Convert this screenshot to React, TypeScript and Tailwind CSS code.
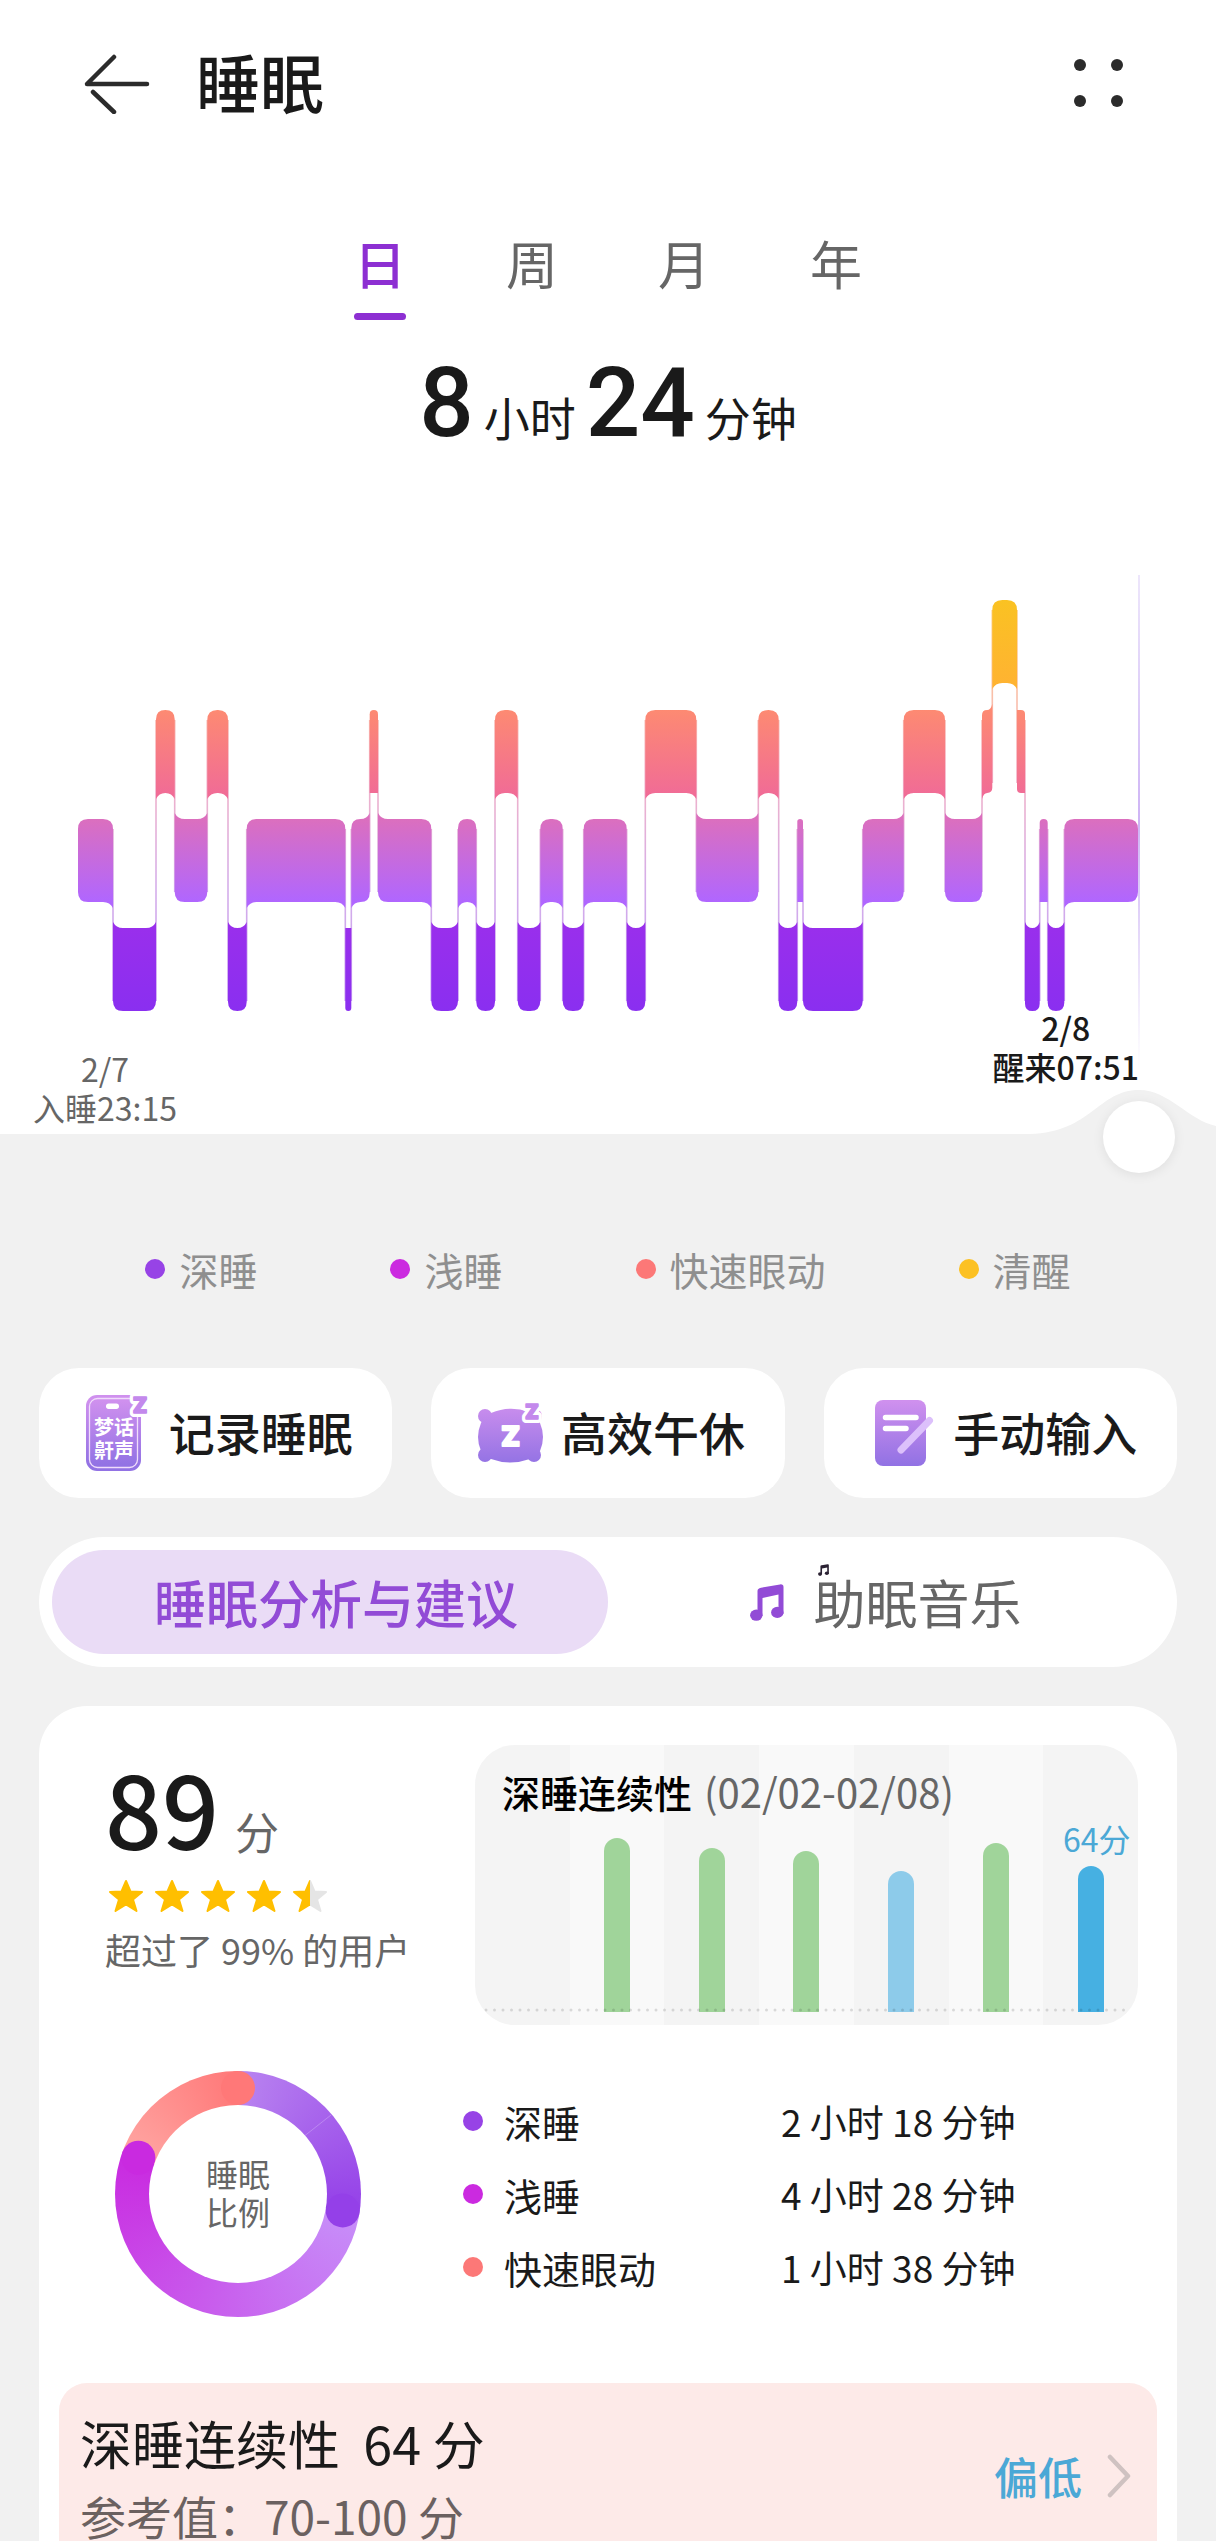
import { useState } from 'react'

type Stage = 'awake' | 'rem' | 'light' | 'deep'

const STAGE_TOP: Record<Stage, number> = { awake: 600, rem: 710, light: 819, deep: 928 }
const STAGE_FILL: Record<Stage, string> = {
  awake: 'url(#g-awake)',
  rem: 'url(#g-rem)',
  light: 'url(#g-light)',
  deep: 'url(#g-deep)',
}
const BAR_H = 83
const NIGHT_END = 1138

// [start, stage], each block runs until the next one starts
const NIGHT: [number, Stage][] = [
  [78, 'light'], [113, 'deep'], [156, 'rem'], [174.7, 'light'], [207.3, 'rem'], [228, 'deep'],
  [246.7, 'light'], [345.3, 'deep'], [351.3, 'light'], [369.7, 'rem'], [378, 'light'], [431.3, 'deep'],
  [458, 'light'], [476.3, 'deep'], [495, 'rem'], [517.7, 'deep'], [540.3, 'light'], [562.7, 'deep'],
  [583.7, 'light'], [626.7, 'deep'], [645.3, 'rem'], [696.3, 'light'], [758.3, 'rem'], [778.7, 'deep'],
  [797.3, 'light'], [803, 'deep'], [862.7, 'light'], [903.7, 'rem'], [945, 'light'], [982, 'rem'],
  [992.3, 'awake'], [1017, 'rem'], [1025, 'deep'], [1039.7, 'light'], [1047.7, 'deep'], [1064.3, 'light'],
]

// A corner is rounded on the free side and flares out towards the neighbour it joins
function blockPath(i: number) {
  const [x0, stage] = NIGHT[i]
  const x1 = i < NIGHT.length - 1 ? NIGHT[i + 1][0] : NIGHT_END
  const top = STAGE_TOP[stage]
  const bot = top + BAR_H
  const prev = i > 0 ? STAGE_TOP[NIGHT[i - 1][1]] : null
  const next = i < NIGHT.length - 1 ? STAGE_TOP[NIGHT[i + 1][1]] : null
  const w = x1 - x0
  const r = Math.min(w / 2, 10)
  const f = w < 9 ? 0 : 6
  const tl = prev !== null && prev < top ? top - f : top + r
  const tr = next !== null && next < top ? top - f : top + r
  const bl = prev !== null && prev > top ? bot + f : bot - r
  const br = next !== null && next > top ? bot + f : bot - r
  return [
    `M${x0} ${tl}`,
    `Q${x0 + (tl < top ? r * 0.3 : 0)} ${top} ${x0 + r} ${top}`,
    `L${x1 - r} ${top}`,
    `Q${x1 - (tr < top ? r * 0.3 : 0)} ${top} ${x1} ${tr}`,
    `L${x1} ${br}`,
    `Q${x1 - (br > bot ? r * 0.3 : 0)} ${bot} ${x1 - r} ${bot}`,
    `L${x0 + r} ${bot}`,
    `Q${x0 + (bl > bot ? r * 0.3 : 0)} ${bot} ${x0} ${bl}`,
    'Z',
  ].join(' ')
}

function SleepChart() {
  return (
    <svg viewBox="0 560 1216 448" className="block w-full overflow-visible" role="img" aria-label="睡眠">
      <defs>
        <linearGradient id="g-awake" x1="0" y1="600" x2="0" y2="690" gradientUnits="userSpaceOnUse">
          <stop offset="0" stopColor="#fac222" />
          <stop offset="1" stopColor="#ffb233" />
        </linearGradient>
        <linearGradient id="g-rem" x1="0" y1="710" x2="0" y2="799" gradientUnits="userSpaceOnUse">
          <stop offset="0" stopColor="#fd8a72" />
          <stop offset="1" stopColor="#f06a98" />
        </linearGradient>
        <linearGradient id="g-light" x1="0" y1="819" x2="0" y2="902" gradientUnits="userSpaceOnUse">
          <stop offset="0" stopColor="#db6fbe" />
          <stop offset="1" stopColor="#b066ff" />
        </linearGradient>
        <linearGradient id="g-deep" x1="0" y1="928" x2="0" y2="1011" gradientUnits="userSpaceOnUse">
          <stop offset="0" stopColor="#992fec" />
          <stop offset="1" stopColor="#8a2ff0" />
        </linearGradient>
        <linearGradient id="g-join" x1="0" y1="600" x2="0" y2="1011" gradientUnits="userSpaceOnUse">
          <stop offset="0" stopColor="#ffb233" />
          <stop offset="0.4" stopColor="#ee7f9c" />
          <stop offset="0.7" stopColor="#b878dc" />
          <stop offset="1" stopColor="#a05ce8" />
        </linearGradient>
        <linearGradient id="g-cursor" x1="0" y1="575" x2="0" y2="1070" gradientUnits="userSpaceOnUse">
          <stop offset="0" stopColor="#b79bf0" stopOpacity="0.25" />
          <stop offset="0.5" stopColor="#b48bf0" stopOpacity="0.65" />
          <stop offset="1" stopColor="#b79bf0" stopOpacity="0" />
        </linearGradient>
      </defs>

      {NIGHT.slice(1).map(([x, stage], i) => {
        const a = STAGE_TOP[stage]
        const b = STAGE_TOP[NIGHT[i][1]]
        return (
          <rect
            key={x}
            x={x - 0.8}
            y={Math.min(a, b) + 10}
            width="1.6"
            height={Math.abs(a - b) + BAR_H - 20}
            fill="url(#g-join)"
            opacity="0.6"
          />
        )
      })}
      {NIGHT.map(([x, stage], i) => (
        <path key={x} d={blockPath(i)} fill={STAGE_FILL[stage]} />
      ))}
      <rect x="1138" y="575" width="2" height="495" fill="url(#g-cursor)" />
    </svg>
  )
}

const ICON_GRADIENT = (id: string) => (
  <linearGradient id={id} x1="0" y1="0" x2="0" y2="80" gradientUnits="userSpaceOnUse">
    <stop offset="0.1" stopColor="#cf90ee" />
    <stop offset="0.9" stopColor="#9272e4" />
  </linearGradient>
)

function PhoneIcon() {
  return (
    <svg viewBox="0 0 76 80" className="h-[80px] w-[76px] shrink-0" aria-hidden="true">
      <defs>{ICON_GRADIENT('i-phone')}</defs>
      <rect x="7" y="2" width="55" height="76" rx="11" fill="url(#i-phone)" />
      <rect x="10.5" y="5.5" width="48" height="69" rx="8" fill="none" stroke="#f0dcfb" strokeWidth="1.3" />
      <rect x="27" y="10.5" width="13" height="5.5" rx="2.7" fill="#fff" />
      <g className="font-bold" fontSize="20" fill="#fff" textAnchor="middle">
        <text x="35" y="42">梦话</text>
        <text x="35" y="65">鼾声</text>
      </g>
      <text x="61" y="20" fontSize="21" textAnchor="middle" className="font-['Inter'] font-black" fill="#fff" stroke="#fff" strokeWidth="8" strokeLinejoin="round">Z</text>
      <text x="61" y="20" fontSize="21" textAnchor="middle" className="font-['Inter'] font-black" fill="#c389ec" stroke="#c389ec" strokeWidth="1.5" strokeLinejoin="round">Z</text>
    </svg>
  )
}

function PillowIcon() {
  return (
    <svg viewBox="0 0 76 80" className="h-[80px] w-[76px] shrink-0" aria-hidden="true">
      <defs>{ICON_GRADIENT('i-pillow')}</defs>
      <g fill="url(#i-pillow)">
        <path d="M20 20 Q39 12 58 19 Q66 22 69 30 Q75 44 69 58 Q66 64 59 66 Q39 73 20 66 Q13 64 10 58 Q4 44 10 30 Q13 23 20 20Z" />
        <circle cx="14" cy="23" r="7" />
        <circle cx="64" cy="23" r="7" />
        <circle cx="14" cy="62" r="7" />
        <circle cx="63" cy="62" r="7" />
      </g>
      <text x="39.5" y="52.5" fontSize="27" textAnchor="middle" className="font-['Inter'] font-black" fill="#fff" stroke="#fff" strokeWidth="2" strokeLinejoin="round">Z</text>
      <text x="61" y="25.5" fontSize="20" textAnchor="middle" className="font-['Inter'] font-black" fill="#fff" stroke="#fff" strokeWidth="8" strokeLinejoin="round">Z</text>
      <text x="61" y="25.5" fontSize="20" textAnchor="middle" className="font-['Inter'] font-black" fill="#c389ec" stroke="#c389ec" strokeWidth="1.5" strokeLinejoin="round">Z</text>
    </svg>
  )
}

function NoteIcon() {
  return (
    <svg viewBox="0 0 76 80" className="h-[80px] w-[76px] shrink-0" aria-hidden="true">
      <defs>{ICON_GRADIENT('i-note')}</defs>
      <rect x="12" y="7" width="51" height="66" rx="8" fill="url(#i-note)" />
      <path d="M22.5 24.5H53M22.5 35.5H43" stroke="#fff" strokeWidth="5.5" strokeLinecap="round" />
      <path d="M66.5 27.5L38 57" stroke="#dcc0fb" strokeWidth="7" strokeLinecap="round" />
    </svg>
  )
}

function MusicIcon({ className }: { className: string }) {
  return (
    <svg viewBox="0 0 34 37" className={className} fill="currentColor" aria-hidden="true">
      <path d="M7.500 7Q7.500 4.500 11 3.800L30 0.400Q33.500 0 33.500 3V30H28.500V10.500L12.500 14V32H7.500Z" />
      <ellipse cx="6.300" cy="31.200" rx="6.200" ry="5.600" />
      <ellipse cx="27.300" cy="28.400" rx="6.200" ry="5.600" />
    </svg>
  )
}

function Star({ half }: { half?: boolean }) {
  return (
    <svg viewBox="0 0 36 34" className="h-[34px] w-[36px]" aria-hidden="true">
      <defs>
        <linearGradient id="g-half">
          <stop offset="0.5" stopColor="#ffbf00" />
          <stop offset="0.5" stopColor="#e5e5e5" />
        </linearGradient>
      </defs>
      <path
        d="M18 2L22.5 12.5L34 13L25 20.5L28.5 32L18 25.5L7.5 32L11 20.5L2 13L13.5 12.5Z"
        fill={half ? 'url(#g-half)' : '#ffbf00'}
        stroke={half ? 'url(#g-half)' : '#ffbf00'}
        strokeWidth="2"
        strokeLinejoin="round"
      />
    </svg>
  )
}

const PERIODS = ['日', '周', '月', '年']

const LEGEND = [
  { label: '深睡', dot: 'bg-[#9743e6]' },
  { label: '浅睡', dot: 'bg-[#cb2ae0]' },
  { label: '快速眼动', dot: 'bg-[#fc7877]' },
  { label: '清醒', dot: 'bg-[#fcc123]' },
]

const ACTIONS = [
  { label: '记录睡眠', icon: <PhoneIcon /> },
  { label: '高效午休', icon: <PillowIcon /> },
  { label: '手动输入', icon: <NoteIcon /> },
]

const WEEK = [
  { height: 0, color: '' },
  { height: 174, color: 'bg-[#a0d49a]' },
  { height: 164, color: 'bg-[#a0d49a]' },
  { height: 161, color: 'bg-[#a0d49a]' },
  { height: 141, color: 'bg-[#8dcbea]' },
  { height: 169, color: 'bg-[#a0d49a]' },
  { height: 146, color: 'bg-[#46b0e2]', label: '64分' },
]

const RATIO = [
  { label: '深睡', value: '2 小时 18 分钟', dot: 'bg-[#9743e6]' },
  { label: '浅睡', value: '4 小时 28 分钟', dot: 'bg-[#cb2ae0]' },
  { label: '快速眼动', value: '1 小时 38 分钟', dot: 'bg-[#fc7877]' },
]

export default function App() {
  const [period, setPeriod] = useState('日')

  return (
    <div lang="zh-CN" className="min-h-screen bg-[#f1f1f1] font-['Noto_Sans_CJK_SC',sans-serif] text-[#1a1a1a]">

      {/* ── Top: header, period tabs, night chart ── */}
      <section className="relative bg-white">
        <header className="flex h-[168px] items-center px-[84px]">
          <button aria-label="返回">
            <svg viewBox="0 0 66 60" className="h-[60px] w-[66px]" fill="none" stroke="#2b2b2b" strokeWidth="4.5" strokeLinecap="round" strokeLinejoin="round">
              <path d="M63 30H3L30 3M9 38L30 58" />
            </svg>
          </button>
          <h1 className="ml-[46px] pb-[8px] text-[64px] leading-[80px] font-medium">睡眠</h1>
          <button className="ml-auto mr-[8px]" aria-label="更多">
            <svg viewBox="0 0 50 50" className="h-[50px] w-[50px]" fill="#2b2b2b">
              <circle cx="6" cy="6" r="6" />
              <circle cx="43" cy="6" r="6" />
              <circle cx="6" cy="42" r="6" />
              <circle cx="43" cy="42" r="6" />
            </svg>
          </button>
        </header>

        <nav className="mt-[65px] flex justify-center gap-[100px]">
          {PERIODS.map(p => (
            <button
              key={p}
              onClick={() => setPeriod(p)}
              className={`flex w-[52px] flex-col items-center gap-[20px] text-[52px] leading-[60px] ${period === p ? 'font-medium text-[#8d2fd2]' : 'text-[#666666]'}`}
            >
              {p}
              <span className={`h-[7px] w-full rounded-full ${period === p ? 'bg-[#8d2fd2]' : ''}`} />
            </button>
          ))}
        </nav>

        <p className="mt-[30px] flex h-[210px] items-baseline justify-center gap-[10px] text-[46px] leading-[106px]">
          <span className="font-['Roboto',sans-serif] text-[96px] font-medium">8</span>
          小时
          <span className="font-['Roboto',sans-serif] text-[96px] font-medium">24</span>
          分钟
        </p>

        <SleepChart />

        <div className="flex h-[126px] items-start justify-between pr-[77px] pl-[33px] text-center text-[32px] leading-[39px]">
          <p className="pt-[41px] text-[#666666]">2/7<br />入睡23:15</p>
          <p className="relative z-10 font-medium">2/8<br />醒来07:51</p>
        </div>

        {/* Drag handle sitting on the edge of the chart */}
        <svg viewBox="0 0 186 45" className="absolute right-0 bottom-0 h-[45px] w-[186px]" aria-hidden="true">
          <path d="M0 45C62 43 68 1 109 1C139 1 158 31 186 37V45Z" fill="#f1f1f1" />
        </svg>
        <button aria-label="拖动" className="absolute right-[41px] bottom-[-39px] size-[72px] rounded-full bg-white shadow-[0_2px_12px_rgba(0,0,0,0.08)]" />
      </section>

      {/* ── Stage legend ── */}
      <ul className="mt-[107px] flex justify-center gap-[133px] text-[39px] leading-[56px] text-[#8f8f8f]">
        {LEGEND.map(l => (
          <li key={l.label} className="flex items-center gap-[14px]">
            <span className={`size-[20px] rounded-full ${l.dot}`} />
            {l.label}
          </li>
        ))}
      </ul>

      <main className="mt-[71px] flex flex-col gap-[39px] px-[39px]">
        <div className="grid grid-cols-3 gap-[39px]">
          {ACTIONS.map(a => (
            <button key={a.label} className="flex h-[130px] items-center justify-center gap-[14px] rounded-[40px] bg-white text-[46px] leading-[60px] font-medium">
              {a.icon}
              <span className="pb-[4px]">{a.label}</span>
            </button>
          ))}
        </div>

        <div className="grid grid-cols-2 rounded-full bg-white p-[13px] text-[52px] leading-[104px]">
          <button className="rounded-full bg-[#eadcf6] pl-[12px] font-medium text-[#924bd6]">睡眠分析与建议</button>
          <button className="flex items-center justify-center gap-[29px] text-[#666666]">
            <MusicIcon className="h-[37px] w-[34px] text-[#924bd6]" />
            <span className="relative">
              助眠音乐
              <MusicIcon className="absolute top-[14px] left-[5px] h-[12px] w-[11px] text-[#2b2233]" />
            </span>
          </button>
        </div>

        {/* ── Analysis card ── */}
        <section className="rounded-t-[48px] bg-white pt-[39px]">
          <div className="flex justify-between pr-[39px] pl-[66px]">
            <div className="pt-[17px]">
              <p className="flex h-[90px] items-baseline gap-[16px] leading-[90px]">
                <span className="text-[100px] font-medium">89</span>
                <span className="text-[44px] text-[#666666]">分</span>
              </p>
              <div className="mt-[27px] flex gap-[10px] pl-[3px]" role="img" aria-label="4.5">
                <Star />
                <Star />
                <Star />
                <Star />
                <Star half />
              </div>
              <p className="mt-[11px] text-[36px] leading-[50px] text-[#666666]">超过了 99% 的用户</p>
            </div>

            <div className="relative h-[280px] w-[663px] overflow-hidden rounded-[40px] bg-[#f4f4f4]">
              <div className="grid h-full grid-cols-7">
                {WEEK.map((d, i) => (
                  <div key={i} className={`flex flex-col items-center justify-end pb-[13px] ${i % 2 ? 'bg-[#f9f9f9]' : ''}`}>
                    {d.label && <span className="mb-[8px] pl-[12px] text-[32px] leading-[40px] whitespace-nowrap text-[#4ba8d6]">{d.label}</span>}
                    <span className={`w-[26px] rounded-t-full ${d.color}`} style={{ height: d.height }} />
                  </div>
                ))}
              </div>
              <svg className="absolute inset-x-0 bottom-[13px] h-[4px] w-full" aria-hidden="true">
                <line x1="11" y1="2" x2="655" y2="2" stroke="#000" strokeOpacity="0.13" strokeWidth="3" strokeLinecap="round" strokeDasharray="0 8.5" />
              </svg>
              <h2 className="absolute top-[20px] left-[27px] flex items-baseline gap-[12px] text-[38px] leading-[52px] font-medium text-black">
                深睡连续性
                <span className="text-[40px] font-normal text-[#666666]">(02/02-02/08)</span>
              </h2>
            </div>
          </div>

          <div className="mt-[46px] flex items-center pl-[76px]">
            <div className="relative flex size-[246px] items-center justify-center rounded-full bg-[conic-gradient(#b984f0_0deg,#9440e8_99deg,#c78ff9_99deg,#c92ae0_290deg,#ffa5a2_290deg,#ff7878_360deg)]">
              <svg viewBox="0 0 246 246" className="absolute inset-0" aria-hidden="true">
                <circle cx="123" cy="17" r="17" fill="#ff7878" />
                <circle cx="227.7" cy="139.4" r="17" fill="#9440e8" />
                <circle cx="23.4" cy="86.7" r="17" fill="#c92ae0" />
                <path d="M190 64.5L216 44" stroke="#fff" strokeOpacity="0.4" strokeWidth="0.6" />
              </svg>
              <p className="relative flex size-[178px] items-center justify-center rounded-full bg-white pb-[4px] text-center text-[32px] leading-[38px] text-[#666666]">
                睡眠<br />比例
              </p>
            </div>

            <table className="ml-[102px] text-[38px] leading-[73px]">
              <tbody>
                {RATIO.map(r => (
                  <tr key={r.label}>
                    <th scope="row" className="w-[318px] p-0 text-left font-normal">
                      <span className="flex items-center gap-[21px]">
                        <span className={`size-[20px] rounded-full ${r.dot}`} />
                        {r.label}
                      </span>
                    </th>
                    <td className="p-0 text-[37px]">{r.value}</td>
                  </tr>
                ))}
              </tbody>
            </table>
          </div>

          <a href="#continuity" className="mx-[20px] mt-[66px] flex items-center justify-between rounded-t-[28px] bg-[#fdeae8] pt-[28px] pr-[26px] pl-[21px]">
            <div>
              <h3 className="text-[52px] leading-[64px]">深睡连续性&nbsp; 64 分</h3>
              <p className="mt-[14px] text-[46px] leading-[52px] text-[#6b6160]">参考值：70-100 分</p>
            </div>
            <span className="flex items-center gap-[25px] text-[44px] leading-[60px] font-medium text-[#4ba8d6]">
              偏低
              <svg viewBox="0 0 24 44" className="h-[44px] w-[24px]" fill="none" stroke="#cfc2c1" strokeWidth="4.5" strokeLinecap="round" strokeLinejoin="round" aria-hidden="true">
                <path d="M3 3L21 22L3 41" />
              </svg>
            </span>
          </a>
        </section>
      </main>
    </div>
  )
}
